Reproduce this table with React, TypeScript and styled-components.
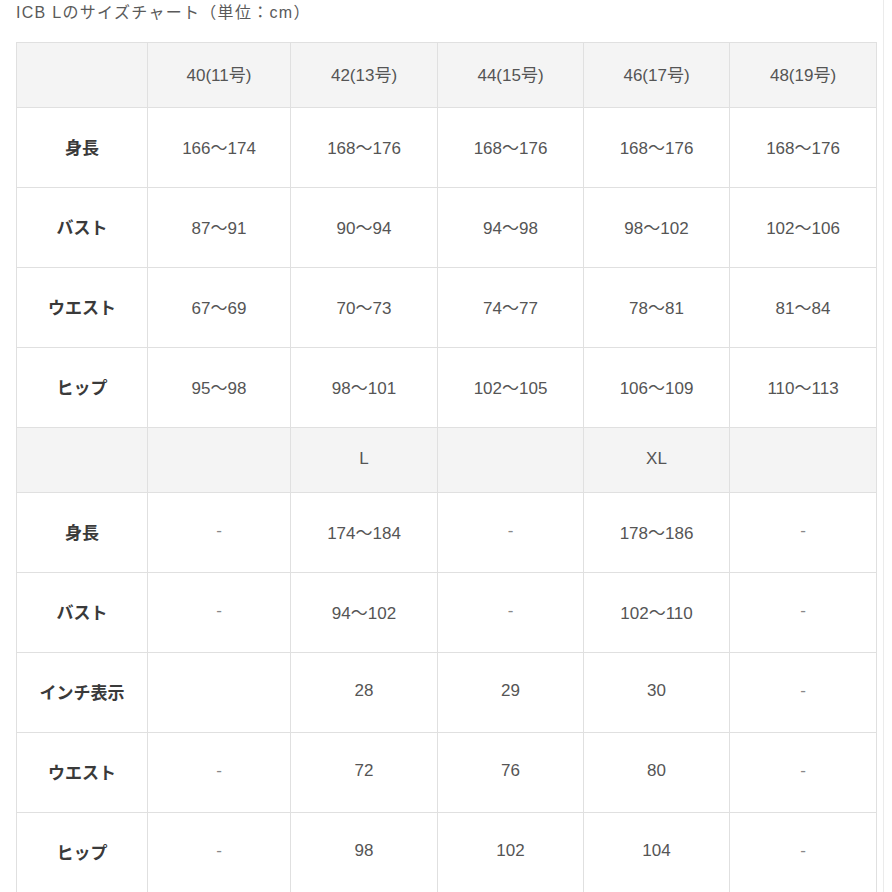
import styled, { createGlobalStyle } from "styled-components";

const GlobalStyle = createGlobalStyle`
    html, body {
        margin: 0;
        padding: 0;
        background: #ffffff;
    }
    body {
        font-family: "Liberation Sans", "Noto Sans CJK JP", sans-serif;
    }
`;

type Row = {
    label: string;
    cells: string[];
    head?: boolean;
};

const widths = [131, 143, 147, 146, 146, 147];

const rows: Row[] = [
    { label: "", cells: ["40(11号)", "42(13号)", "44(15号)", "46(17号)", "48(19号)"], head: true },
    { label: "身長", cells: ["166～174", "168～176", "168～176", "168～176", "168～176"] },
    { label: "バスト", cells: ["87～91", "90～94", "94～98", "98～102", "102～106"] },
    { label: "ウエスト", cells: ["67～69", "70～73", "74～77", "78～81", "81～84"] },
    { label: "ヒップ", cells: ["95～98", "98～101", "102～105", "106～109", "110～113"] },
    { label: "", cells: ["", "L", "", "XL", ""], head: true },
    { label: "身長", cells: ["-", "174～184", "-", "178～186", "-"] },
    { label: "バスト", cells: ["-", "94～102", "-", "102～110", "-"] },
    { label: "インチ表示", cells: ["", "28", "29", "30", "-"] },
    { label: "ウエスト", cells: ["-", "72", "76", "80", "-"] },
    { label: "ヒップ", cells: ["-", "98", "102", "104", "-"] },
];

function App() {
    return (
        <Page>
            <GlobalStyle />
            <Title>ICB Lのサイズチャート（単位：cm）</Title>
            <Table>
                <colgroup>
                    {widths.map((w, i) => (
                        <col key={i} style={{ width: w }} />
                    ))}
                </colgroup>
                <tbody>
                    {rows.map((row, i) => (
                        <TableRow key={i} $head={row.head}>
                            <LabelCell>{row.label}</LabelCell>
                            {row.cells.map((c, j) => (
                                <Cell key={j} $dash={c === "-"}>{c}</Cell>
                            ))}
                        </TableRow>
                    ))}
                </tbody>
            </Table>
        </Page>
    );
}

const Page = styled.div`
    box-sizing: border-box;
    width: 884px;
    height: 892px;
    overflow: hidden;
    padding: 0 0 0 16px;
    border-right: 1px solid #ebebeb;
`;

const Title = styled.div`
    font-size: 16px;
    letter-spacing: 1.3px;
    line-height: 26px;
    color: #5a5a5a;
    margin-bottom: 16px;
    white-space: nowrap;
`;

const Table = styled.table`
    width: 860px;
    table-layout: fixed;
    border-collapse: collapse;
    border: 1px solid #e0e0e0;
`;

const TableRow = styled.tr<{ $head?: boolean }>`
    height: ${(p) => (p.$head ? "65px" : "80px")};
    background: ${(p) => (p.$head ? "#f4f4f4" : "#ffffff")};
`;

const Cell = styled.td<{ $dash?: boolean }>`
    border: 1px solid #e0e0e0;
    padding: 0 0 3px;
    text-align: center;
    vertical-align: middle;
    font-size: 17px;
    color: ${(p) => (p.$dash ? "#888888" : "#555555")};
    white-space: nowrap;
`;

const LabelCell = styled(Cell)`
    font-weight: bold;
    color: #3a3a3a;
`;

export default App;
